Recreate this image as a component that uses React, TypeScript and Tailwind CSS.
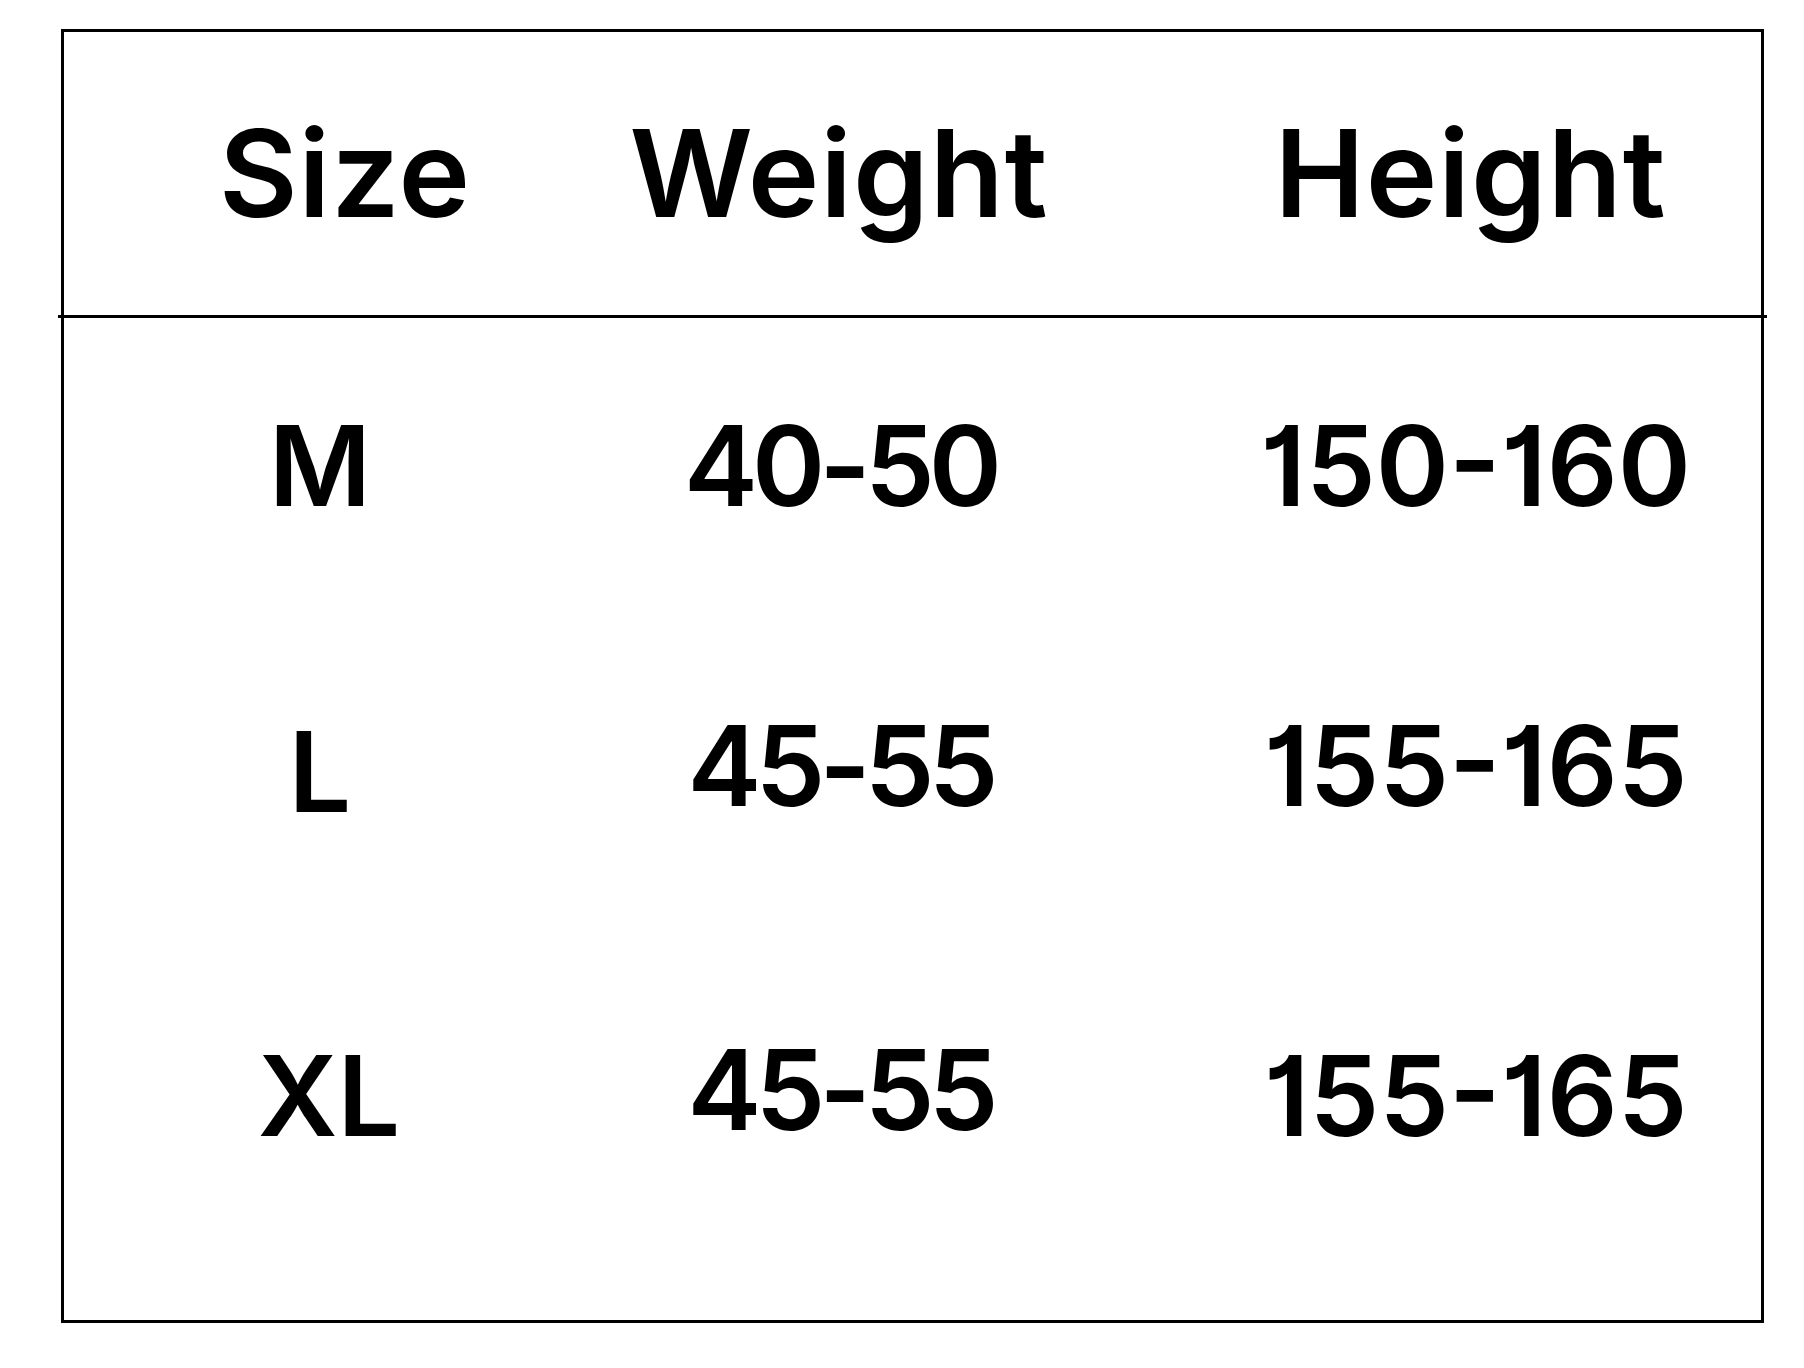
import React from "react";

const rows = [
  { size: "M", weight: "40-50", height: "150-160", h: "h-[294px]", s: "pr-[18px]", w: "", t: "" },
  { size: "L", weight: "45-55", height: "155-165", h: "h-[306px]", s: "pr-[18px] pt-[12px]", w: "", t: "" },
  { size: "XL", weight: "45-55", height: "155-165", h: "h-[348px]", s: "pt-[6px]", w: "pb-[6px]", t: "pt-[6px]" },
];

export default function App() {
  return (
    <div className="w-[1804px] h-[1368px] bg-white pt-[29px] pl-[61px] font-['Inter','Liberation_Sans',sans-serif] text-black">
      <div className="w-[1703px] h-[1294px] border-[3px] border-black flex flex-col">
        <div className="h-[283px] grid grid-cols-[530px_488px_1fr] items-center text-[121px] font-semibold leading-none tracking-[1px]">
          <div className="text-center pl-[32px]">Size</div>
          <div className="text-center pl-[2px]">Weight</div>
          <div className="text-center pl-[98px]">Height</div>
        </div>
        <div className="h-[3px] bg-black -mx-[6px]" />
        {rows.map((r, i) => (
          <div
            key={i}
            className={`${r.h} grid grid-cols-[530px_488px_1fr] items-center text-[111px] font-semibold leading-none [font-feature-settings:'cv01']`}
          >
            <div className={`text-center ${r.s}`}>{r.size}</div>
            <div className={`text-center pl-[4px] tracking-[-6px] ${r.w}`}>{r.weight}</div>
            <div className={`text-center pl-[108px] ${r.t}`}>{r.height}</div>
          </div>
        ))}
        <div className="flex-1" />
      </div>
    </div>
  );
}
